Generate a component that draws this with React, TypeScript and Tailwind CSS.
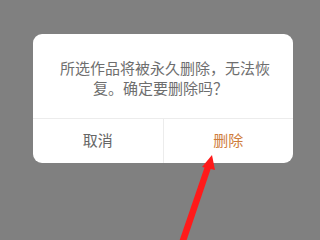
export default function App() {
  return (
    <div
      className="relative w-[320px] h-[240px] overflow-hidden bg-[#808080] pt-[34px] pl-[33px]"
      style={{ fontFamily: '"Noto Sans CJK SC", "Noto Sans", sans-serif' }}
    >
      <div className="w-[260px] rounded-[9px] bg-white overflow-hidden">
        <div className="h-[84px] flex flex-col justify-center text-[15px] leading-[20.5px] text-[#6e6e6e] pt-[4px] whitespace-nowrap">
          <p className="pl-[27px]">所选作品将被永久删除，无法恢</p>
          <p className="pl-[60px]">复。确定要删除吗？</p>
        </div>
        <div className="flex h-[45px] border-t border-[#ececec] text-[15px]">
          <button className="flex-1 flex items-center justify-center text-[#666] border-r border-[#ececec] pb-[2px]">
            取消
          </button>
          <button className="flex-1 flex items-center justify-center text-[#cf7d3c] pb-[2px]">
            删除
          </button>
        </div>
      </div>
      <svg className="absolute left-0 top-0" width="320" height="240" viewBox="0 0 320 240">
        <polygon points="212,155 215,170 202,167" fill="#ff1a1a" />
        <polygon points="205,166 211,168 186,242 179,242" fill="#ff1a1a" />
      </svg>
    </div>
  );
}
